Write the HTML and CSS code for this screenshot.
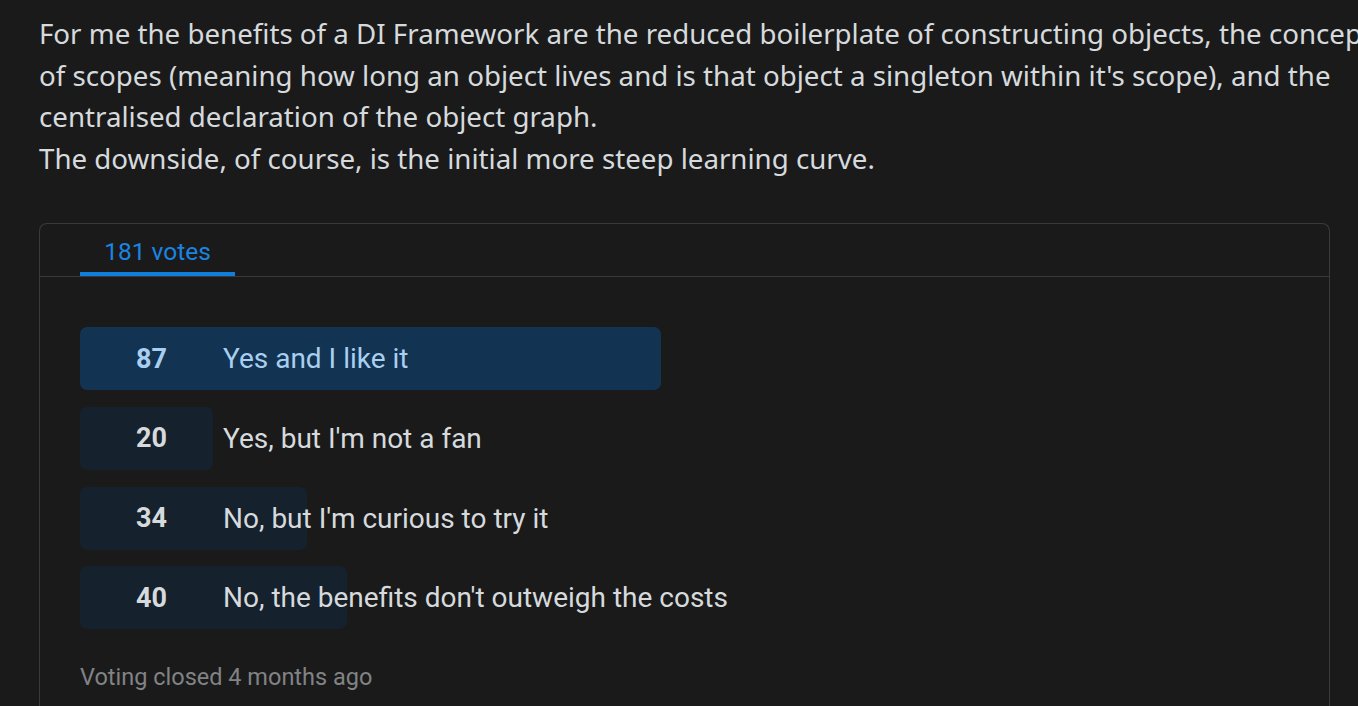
FILE: index.html
```html
<!DOCTYPE html>
<html>
<head>
<meta charset="utf-8">
<link rel="stylesheet" href="styles.css">
</head>
<body>
<div class="post">
  <p class="body-text">For me the benefits of a DI Framework are the reduced boilerplate of constructing objects, the concept of scopes (meaning how long an object lives and is that object a singleton within it's scope), and the centralised declaration of the object graph.<br>The downside, of course, is the initial more steep learning curve.</p>
  <div class="poll">
    <div class="tabs">
      <div class="tab">181 votes</div>
    </div>
    <div class="options">
      <div class="option winner">
        <div class="bar" style="width:581px"></div>
        <span class="count">87</span>
        <span class="label">Yes and I like it</span>
      </div>
      <div class="option">
        <div class="bar" style="width:133px"></div>
        <span class="count">20</span>
        <span class="label">Yes, but I'm not a fan</span>
      </div>
      <div class="option">
        <div class="bar" style="width:227px"></div>
        <span class="count">34</span>
        <span class="label">No, but I'm curious to try it</span>
      </div>
      <div class="option">
        <div class="bar" style="width:267px"></div>
        <span class="count">40</span>
        <span class="label">No, the benefits don't outweigh the costs</span>
      </div>
    </div>
    <div class="closed">Voting closed 4 months ago</div>
  </div>
</div>
</body>
</html>
```

FILE: styles.css
```css
html, body {
  margin: 0;
  padding: 0;
  background: #1a1a1b;
  overflow: hidden;
}
.post {
  padding: 13px 0 0 39px;
  width: 1450px;
}
.body-text {
  margin: 0;
  width: 1340px;
  font-family: "Noto Sans", sans-serif;
  font-size: 27.7px;
  line-height: 41.6px;
  color: #d7dadc;
}
.poll {
  margin-top: 44px;
  width: 1289px;
  border: 1px solid #3a3a3c;
  border-radius: 8px;
  border-bottom: none;
  height: 500px;
  font-family: "Roboto", sans-serif;
}
.tabs {
  height: 52px;
  border-bottom: 1px solid #3a3a3c;
  padding-left: 40px;
  display: flex;
  align-items: flex-end;
}
.tab {
  width: 155px;
  height: 48px;
  box-sizing: border-box;
  border-bottom: 4px solid #0f7fd9;
  color: #1a84e0;
  font-size: 24.5px;
  display: flex;
  align-items: center;
  justify-content: center;
  padding-top: 3px;
}
.options {
  padding: 50px 0 0 40px;
  display: flex;
  flex-direction: column;
  gap: 16.6px;
}
.option {
  position: relative;
  height: 63px;
  display: flex;
  align-items: center;
  color: #d7dadc;
}
.bar {
  position: absolute;
  left: 0;
  top: 0;
  bottom: 0;
  background: #15212d;
  border-radius: 7px;
}
.winner .bar {
  background: #133352;
}
.winner {
  color: #a9cff0;
}
.count {
  position: relative;
  width: 143px;
  text-align: center;
  font-weight: 700;
  font-size: 27px;
}
.label {
  position: relative;
  font-size: 28px;
}
.closed {
  margin: 34px 0 0 40px;
  color: #818384;
  font-size: 23.5px;
}
```
